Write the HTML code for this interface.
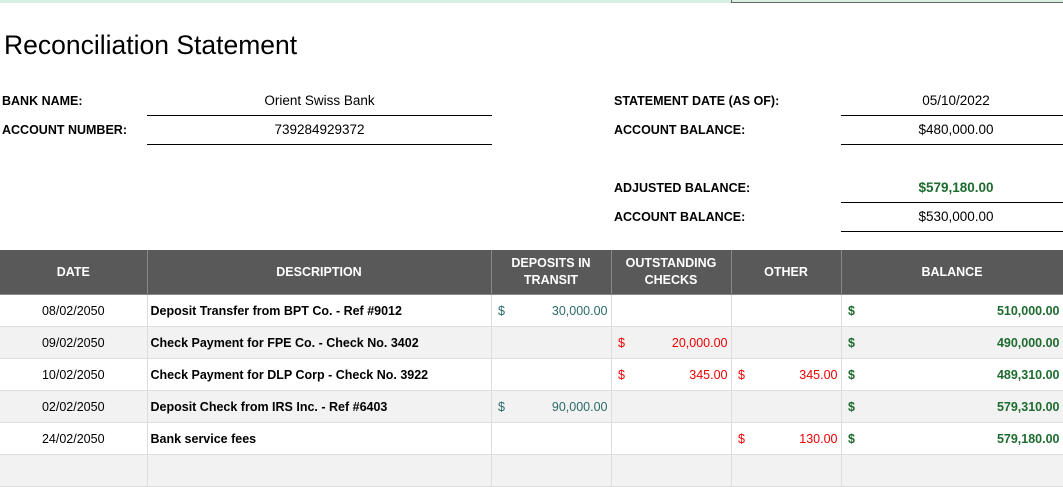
<!DOCTYPE html><html><head><style>
body{margin:0;width:1063px;height:486px;overflow:hidden;background:#fff;font-family:"Liberation Sans",sans-serif;position:relative}
.a{position:absolute}
.lbl{font-size:12.5px;font-weight:bold;color:#000}
.val{font-size:13.5px;text-align:center;color:#000}
.ln{position:absolute;height:1px;background:#000}
table{position:absolute;left:0;top:250px;border-collapse:collapse;table-layout:fixed;width:1063px}
td,th{border:1px solid #ddd;font-size:12.5px;padding:0 3px;white-space:nowrap}
td:first-child,th:first-child{border-left:none}
th{background:#595959;color:#fff;font-size:12.5px;height:44px;border-color:#888;border-top:none;line-height:17px}
td{height:31px}
tr.g td{background:#f2f2f2}
.d{text-align:center}.b{font-weight:bold}
.m{display:flex;justify-content:space-between}
.t{color:#2b6a6a}.r{color:#e00}.gr{color:#1e6b2e;font-weight:bold}
</style></head><body>
<div class="a" style="left:0;top:0;width:1063px;height:3px;background:#d6efdf"></div>
<div class="a" style="left:731px;top:0;width:332px;height:2px;border-left:1px solid #666;border-bottom:1px solid #666"></div>
<div class="a" style="left:4px;top:30px;font-size:26.5px">Reconciliation Statement</div>
<div class="a lbl" style="left:2px;top:94px">BANK NAME:</div>
<div class="a val" style="left:147px;top:93px;width:345px">Orient Swiss Bank</div>
<div class="ln" style="left:147px;top:115px;width:345px"></div>
<div class="a lbl" style="left:2px;top:123px">ACCOUNT NUMBER:</div>
<div class="a val" style="left:147px;top:122px;width:345px">739284929372</div>
<div class="ln" style="left:147px;top:144px;width:345px"></div>
<div class="a lbl" style="left:614px;top:94px">STATEMENT DATE (AS OF):</div>
<div class="a val" style="left:841px;top:93px;width:230px">05/10/2022</div>
<div class="ln" style="left:841px;top:115px;width:222px"></div>
<div class="a lbl" style="left:614px;top:123px">ACCOUNT BALANCE:</div>
<div class="a val" style="left:841px;top:122px;width:230px">$480,000.00</div>
<div class="ln" style="left:841px;top:144px;width:222px"></div>
<div class="a lbl" style="left:614px;top:181px">ADJUSTED BALANCE:</div>
<div class="a val" style="left:841px;top:180px;width:230px;color:#1e6b2e;font-weight:bold">$579,180.00</div>
<div class="ln" style="left:841px;top:202px;width:222px"></div>
<div class="a lbl" style="left:614px;top:210px">ACCOUNT BALANCE:</div>
<div class="a val" style="left:841px;top:209px;width:230px">$530,000.00</div>
<div class="ln" style="left:841px;top:231px;width:222px"></div>
<table>
<colgroup><col style="width:147px"><col style="width:344px"><col style="width:120px"><col style="width:120px"><col style="width:110px"><col style="width:222px"></colgroup>
<tr><th>DATE</th><th>DESCRIPTION</th><th>DEPOSITS IN<br>TRANSIT</th><th>OUTSTANDING<br>CHECKS</th><th>OTHER</th><th>BALANCE</th></tr>
<tr><td class="d">08/02/2050</td><td class="b">Deposit Transfer from BPT Co. - Ref #9012</td><td class="t"><div class="m"><span>&nbsp;$</span><span>30,000.00</span></div></td><td></td><td></td><td class="gr"><div class="m"><span>&nbsp;$</span><span>510,000.00</span></div></td></tr>
<tr class="g"><td class="d">09/02/2050</td><td class="b">Check Payment for FPE Co. - Check No. 3402</td><td></td><td class="r"><div class="m"><span>&nbsp;$</span><span>20,000.00</span></div></td><td></td><td class="gr"><div class="m"><span>&nbsp;$</span><span>490,000.00</span></div></td></tr>
<tr><td class="d">10/02/2050</td><td class="b">Check Payment for DLP Corp - Check No. 3922</td><td></td><td class="r"><div class="m"><span>&nbsp;$</span><span>345.00</span></div></td><td class="r"><div class="m"><span>&nbsp;$</span><span>345.00</span></div></td><td class="gr"><div class="m"><span>&nbsp;$</span><span>489,310.00</span></div></td></tr>
<tr class="g"><td class="d">02/02/2050</td><td class="b">Deposit Check from IRS Inc. - Ref #6403</td><td class="t"><div class="m"><span>&nbsp;$</span><span>90,000.00</span></div></td><td></td><td></td><td class="gr"><div class="m"><span>&nbsp;$</span><span>579,310.00</span></div></td></tr>
<tr><td class="d">24/02/2050</td><td class="b">Bank service fees</td><td></td><td></td><td class="r"><div class="m"><span>&nbsp;$</span><span>130.00</span></div></td><td class="gr"><div class="m"><span>&nbsp;$</span><span>579,180.00</span></div></td></tr>
<tr class="g"><td></td><td></td><td></td><td></td><td></td><td></td></tr>
</table>
</body></html>
